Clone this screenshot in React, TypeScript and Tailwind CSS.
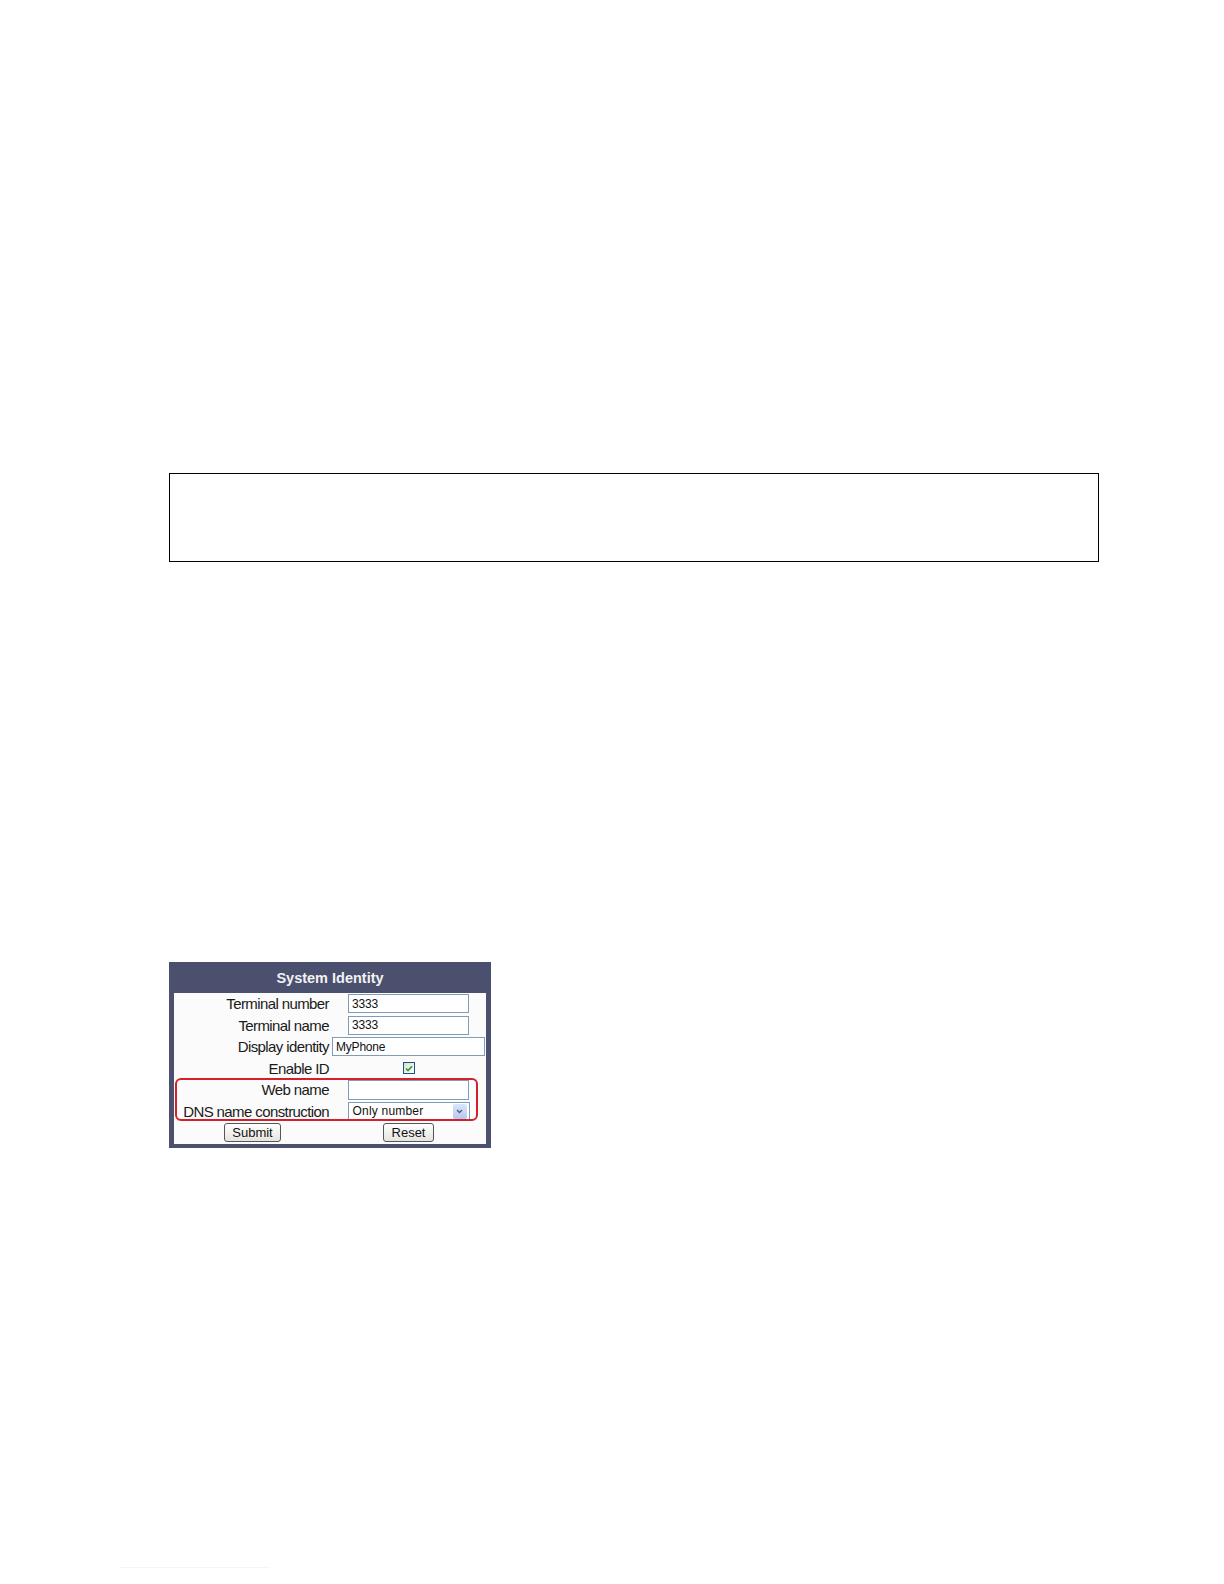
const font = { fontFamily: '"Liberation Sans", Arial, sans-serif' };

function TextInput({ value, wide }: { value: string; wide?: boolean }) {
  return (
    <div
      className={`flex h-[19px] items-center border border-[#7f9db9] bg-white px-[3px] text-[12px] leading-none tracking-[-0.2px] text-[#111] ${
        wide ? "w-[153px]" : "w-[121px]"
      }`}
    >
      {value}
    </div>
  );
}

function Row({ label, children }: { label: string; children: React.ReactNode }) {
  return (
    <div className="grid h-[21.5px] grid-cols-[157px_155px] items-center">
      <div className="pr-[2px] text-right text-[15px] leading-none tracking-[-0.6px] text-[#1a1a1a]">
        {label}
      </div>
      <div className="flex justify-center">{children}</div>
    </div>
  );
}

function Button({ label, width }: { label: string; width: string }) {
  return (
    <div
      className={`flex h-[19px] items-center justify-center rounded-[3px] border border-[#555] bg-gradient-to-b from-white to-[#e4e4e0] text-[13px] leading-none text-[#111] ${width}`}
    >
      {label}
    </div>
  );
}

export default function App() {
  return (
    <div className="relative min-h-[1584px] w-[1224px] bg-white" style={font}>
      <div className="pt-[473px] pl-[169px]">
        <div className="h-[89px] w-[930px] border-[1.5px] border-black" />

        <div className="mt-[400px] w-[322px] bg-[#4a506e] px-[5px] pb-[4px]">
          <div className="flex h-[31px] items-center justify-center pt-[3px] text-[14.5px] font-bold text-[#f2f2f2]">
            System Identity
          </div>
          <div className="relative w-[312px] bg-[#fbfbfb]">
            <Row label="Terminal number">
              <TextInput value="3333" />
            </Row>
            <Row label="Terminal name">
              <TextInput value="3333" />
            </Row>
            <Row label="Display identity">
              <TextInput value="MyPhone" wide />
            </Row>
            <Row label="Enable ID">
              <div className="flex h-[12px] w-[12px] items-center justify-center border border-[#1c5180] bg-gradient-to-br from-[#dcdcd6] to-white">
                <svg width="8" height="7" viewBox="0 0 8 7">
                  <path d="M1 3.5 L3 5.5 L7 1.2" fill="none" stroke="#21a121" strokeWidth="1.6" />
                </svg>
              </div>
            </Row>
            <Row label="Web name">
              <div className="h-[20px] w-[121px] border border-[#7f9db9] bg-white" />
            </Row>
            <Row label="DNS name construction">
              <div className="flex h-[19px] w-[122px] items-center justify-between border border-[#7f9db9] bg-white pl-[4px] pr-[2px] text-[12px] leading-none tracking-[0.2px] text-[#111]">
                <span>Only number</span>
                <div className="flex h-[15px] w-[14px] items-center justify-center rounded-[2px] bg-gradient-to-b from-[#dbe6fd] to-[#b5c8f2]">
                  <svg width="7" height="5" viewBox="0 0 7 5">
                    <path d="M1 1 L3.5 3.5 L6 1" fill="none" stroke="#4d6185" strokeWidth="1.4" />
                  </svg>
                </div>
              </div>
            </Row>
            <div className="grid h-[21.5px] grid-cols-[157px_155px] items-center">
              <div className="flex justify-center">
                <Button label="Submit" width="w-[57px]" />
              </div>
              <div className="flex justify-center">
                <Button label="Reset" width="w-[51px]" />
              </div>
            </div>
            <div className="pointer-events-none absolute left-[1px] top-[85px] h-[43px] w-[303px] rounded-[6px] border-2 border-[#d3202c]" />
          </div>
        </div>
      </div>
      <div className="absolute left-[120px] top-[1567px] h-px w-[150px] bg-[#f6f6ea]" />
    </div>
  );
}
